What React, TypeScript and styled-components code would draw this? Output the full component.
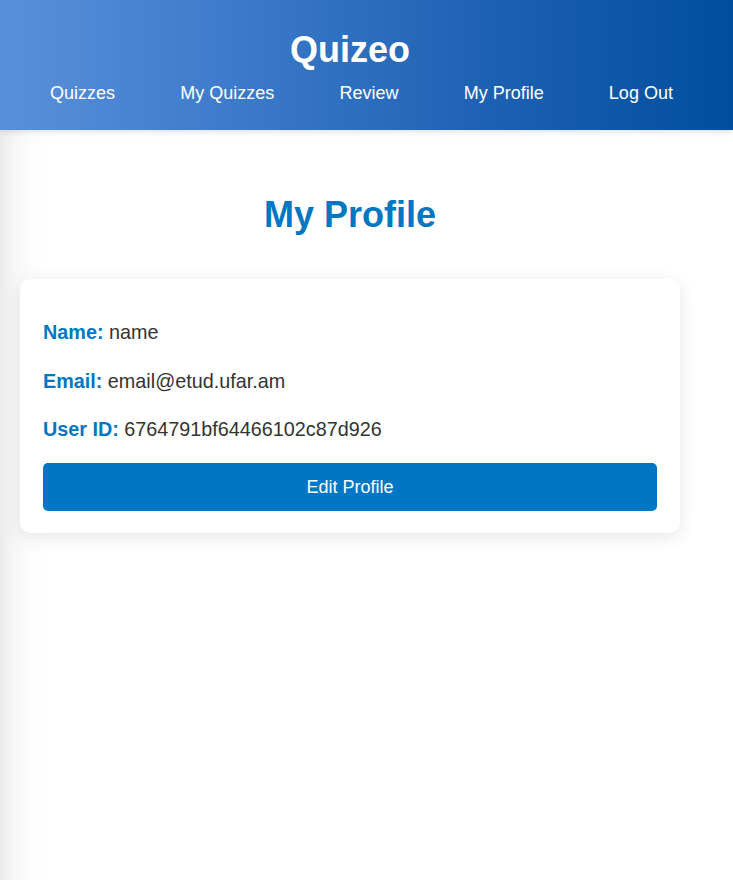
import React from "react";
import styled, { createGlobalStyle } from "styled-components";

const Global = createGlobalStyle`
  html, body { margin: 0; padding: 0; }
  body {
    font-family: "Liberation Sans", Arial, sans-serif;
    min-height: 880px;
    background: linear-gradient(90deg, #ebebeb 0px, #f6f6f6 14px, #fcfcfc 30px, #ffffff 48px);
  }
`;

const Header = styled.header`
  height: 130px;
  box-sizing: border-box;
  padding-top: 28px;
  background: linear-gradient(90deg, #5a90da 0%, #3a78c8 35%, #1f62b3 65%, #004e9d 100%);
  box-shadow: 0 2px 6px rgba(0, 0, 0, 0.12);
  color: #fff;
`;

const Brand = styled.h1`
  width: 700px;
  margin: 0;
  text-align: center;
  font-size: 36px;
  line-height: 44px;
  font-weight: 700;
`;

const Nav = styled.nav`
  display: flex;
  gap: 65.2px;
  padding-left: 50px;
  margin-top: 11px;
`;

const NavLink = styled.a`
  color: #fff;
  text-decoration: none;
  font-size: 18px;
  line-height: 20px;
`;

const Main = styled.main`
  width: 700px;
  box-sizing: border-box;
  padding: 64px 20px 0;
`;

const Title = styled.h2`
  margin: 0 0 43px;
  text-align: center;
  color: #0077c2;
  font-size: 36px;
  line-height: 42px;
  font-weight: 700;
`;

const Card = styled.section`
  background: #fff;
  border-radius: 10px;
  box-shadow: 0 4px 18px rgba(0, 0, 0, 0.1);
  padding: 42px 23px 22px;
  display: flex;
  flex-direction: column;
  gap: 26.5px;
`;

const Row = styled.p`
  margin: 0;
  font-size: 19.8px;
  line-height: 22px;
  color: #333;
`;

const Label = styled.strong`
  color: #0077c2;
  font-weight: 700;
`;

const Button = styled.button`
  margin-top: -3.5px;
  height: 48px;
  border: none;
  border-radius: 5px;
  background: #0077c4;
  color: #fff;
  font-family: inherit;
  font-size: 18px;
  cursor: pointer;
`;

export default function App() {
  return (
    <>
      <Global />
      <Header>
        <Brand>Quizeo</Brand>
        <Nav>
          <NavLink href="#">Quizzes</NavLink>
          <NavLink href="#">My Quizzes</NavLink>
          <NavLink href="#">Review</NavLink>
          <NavLink href="#">My Profile</NavLink>
          <NavLink href="#">Log Out</NavLink>
        </Nav>
      </Header>
      <Main>
        <Title>My Profile</Title>
        <Card>
          <Row>
            <Label>Name:</Label> name
          </Row>
          <Row>
            <Label>Email:</Label> email@etud.ufar.am
          </Row>
          <Row>
            <Label>User ID:</Label> 6764791bf64466102c87d926
          </Row>
          <Button>Edit Profile</Button>
        </Card>
      </Main>
    </>
  );
}
